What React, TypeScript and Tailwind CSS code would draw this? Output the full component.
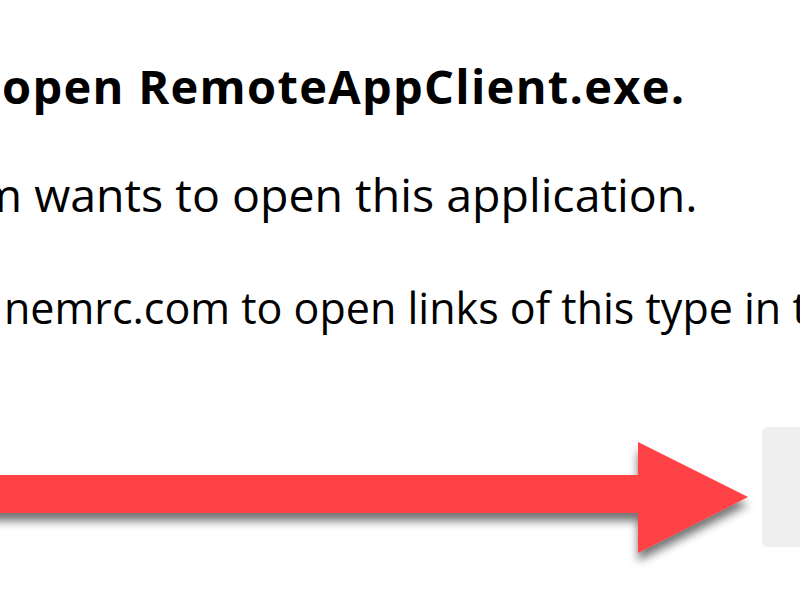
import React from 'react';

function RedArrow() {
  return (
    <svg className="absolute left-0 top-[430px]" width="760" height="140" viewBox="0 0 760 140">
      <defs>
        <filter id="arrowShadow" x="-10%" y="-30%" width="120%" height="180%">
          <feGaussianBlur in="SourceAlpha" stdDeviation="5" />
          <feOffset dx="0" dy="8" result="blur" />
          <feComponentTransfer>
            <feFuncA type="linear" slope="0.55" />
          </feComponentTransfer>
          <feMerge>
            <feMergeNode />
            <feMergeNode in="SourceGraphic" />
          </feMerge>
        </filter>
      </defs>
      <polygon
        points="-20,45 638,45 638,12 748,67 638,123 638,83 -20,83"
        fill="#fe4345"
        filter="url(#arrowShadow)"
      />
    </svg>
  );
}

export default function App() {
  return (
    <div
      className="relative w-[800px] h-[600px] overflow-hidden bg-white text-black"
      style={{ fontFamily: '"Open Sans", "Noto Sans", sans-serif' }}
    >
      <div className="flex flex-col pt-[56px]">
        {/* Title */}
        <div className="whitespace-nowrap text-[47px] font-bold tracking-[1.3px] leading-[60px] ml-[2px]">
          open RemoteAppClient.exe.
        </div>

        {/* Origin line */}
        <div className="whitespace-nowrap text-[46.5px] leading-[60px] mt-[48px] ml-[-21px]">
          m wants to open this application.
        </div>

        {/* Checkbox label */}
        <div className="whitespace-nowrap text-[43px] leading-[60px] mt-[54px] ml-[4px]">
          nemrc.com to open links of this type in the associated app
        </div>

        {/* Buttons */}
        <div className="flex justify-end mt-[89px]">
          <div className="w-[120px] h-[120px] mr-[-82px] rounded-[6px] bg-[#efefef]" />
        </div>
      </div>

      <RedArrow />
    </div>
  );
}
